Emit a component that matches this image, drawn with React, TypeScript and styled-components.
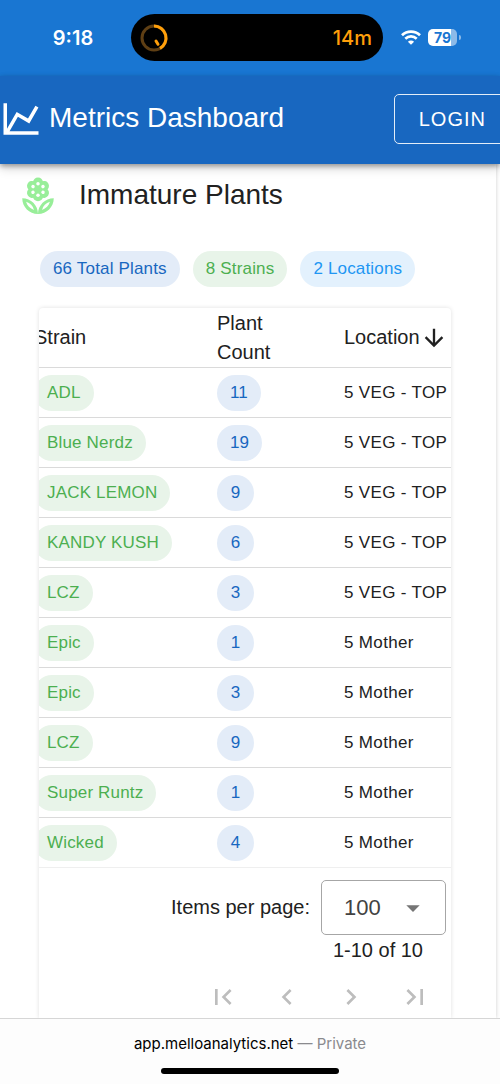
import React from 'react';
import styled, { createGlobalStyle } from 'styled-components';
import {
  MdArrowDropDown,
  MdChevronLeft,
  MdChevronRight,
  MdFirstPage,
  MdLastPage,
} from 'react-icons/md';

const tones = {
  primary: { color: '#1867c0', background: '#e3ecf8' },
  success: { color: '#4caf50', background: '#e8f4e9' },
  info: { color: '#2196f3', background: '#e3f1fd' },
};

type Tone = keyof typeof tones;

const GlobalStyle = createGlobalStyle`
  * { box-sizing: border-box; }
  body {
    margin: 0;
    background: #fff;
    color: #212121;
    font-family: "Liberation Sans", Arial, sans-serif;
    font-size: 20px;
    overflow-x: hidden;
  }
`;

const Screen = styled.div`
  display: flex;
  flex-direction: column;
  min-height: 100vh;
  overflow: hidden;
`;

const StatusBar = styled.div`
  display: grid;
  grid-template-columns: 1fr 252px 1fr;
  align-items: center;
  height: 76px;
  padding-bottom: 1px;
  background: #1976d2;
  color: #fff;
  font-family: Inter, sans-serif;
`;

const Clock = styled.time`
  justify-self: center;
  padding-left: 22px;
  font-size: 20px;
  font-weight: 600;
`;

const Island = styled.div`
  display: flex;
  align-items: center;
  justify-content: space-between;
  height: 47px;
  padding: 0 11px 0 8px;
  margin-left: 7px;
  margin-right: -7px;
  border-radius: 24px;
  background: #000;
  color: #ff9f0a;
  font-size: 20px;
  font-weight: 500;
`;

const StatusIcons = styled.div`
  display: flex;
  align-items: center;
  justify-content: flex-end;
  gap: 7px;
  padding-right: 39px;
`;

const Battery = styled.div`
  display: flex;
  align-items: center;
  gap: 2px;
`;

const BatteryBody = styled.span`
  width: 29px;
  height: 17px;
  border-radius: 5px;
  background: linear-gradient(90deg, #fff 79%, #8cbae8 79%);
  color: #1976d2;
  font-size: 14px;
  font-weight: 700;
  line-height: 17px;
  text-align: center;
`;

const BatteryCap = styled.span`
  width: 2px;
  height: 5px;
  border-radius: 0 2px 2px 0;
  background: #8cbae8;
`;

const AppBar = styled.header`
  position: relative;
  display: flex;
  align-items: center;
  height: 88px;
  padding-bottom: 2px;
  background: #1867c0;
  color: #fff;
  box-shadow: 0 2px 5px rgba(0, 0, 0, 0.35), 0 5px 10px rgba(0, 0, 0, 0.14);
`;

const AppTitle = styled.span`
  flex: 1;
  padding: 0 0 2px 7px;
  font-size: 28px;
  line-height: 36px;
  white-space: nowrap;
`;

const LoginButton = styled.button`
  height: 50px;
  flex: none;
  margin-right: -11px;
  padding: 0 24px;
  border: 1px solid #e3edf8;
  border-radius: 5px;
  background: transparent;
  color: #fff;
  font: inherit;
  letter-spacing: 1px;
`;

const Main = styled.main`
  flex: 1;
  margin-right: 4px;
  padding: 10px 45px 0 0;
  box-shadow: 0 0 4px rgba(0, 0, 0, 0.2);
`;

const Heading = styled.div`
  display: flex;
  align-items: center;
  gap: 20px;
  height: 42px;
  padding-left: 17px;
`;

const Title = styled.h1`
  margin: 0;
  font-size: 28px;
  font-weight: 400;
  line-height: 36px;
`;

const Summary = styled.div`
  display: flex;
  gap: 13px;
  padding: 35px 0 21px 40px;
`;

const Chip = styled.span<{ $tone: Tone }>`
  display: inline-flex;
  align-items: center;
  justify-content: center;
  min-width: 37px;
  height: 36px;
  padding: 0 13px;
  border-radius: 18px;
  background: ${({ $tone }) => tones[$tone].background};
  color: ${({ $tone }) => tones[$tone].color};
  font-size: 17px;
  letter-spacing: 0.01em;
  white-space: nowrap;
`;

const TableCard = styled.section`
  margin-left: 39px;
  border-radius: 4px 4px 0 0;
  box-shadow: 0 0 4px rgba(0, 0, 0, 0.13);
`;

const TableScroller = styled.div`
  overflow: hidden;
`;

const Table = styled.table`
  width: calc(100% + 25px);
  margin-left: -25px;
  border-collapse: separate;
  border-spacing: 0;
  table-layout: fixed;
`;

const HeadCell = styled.th<{ $width?: number }>`
  width: ${({ $width }) => ($width ? `${$width}px` : 'auto')};
  height: 60px;
  padding: 0 0 0 20px;
  border-bottom: 1px solid #dadada;
  font-size: 20px;
  font-weight: 400;
  line-height: 29px;
  text-align: left;

  &:nth-child(2) { padding-right: 20px; }
`;

const SortLabel = styled.span`
  display: flex;
  align-items: center;
`;

const Cell = styled.td`
  height: 50px;
  padding: 0 0 0 20px;
  border-bottom: 1px solid #dadada;
  font-size: 17px;
  letter-spacing: 0.02em;
  white-space: nowrap;

  tr:last-child > & { border-bottom-color: #efefef; }
`;

const Footer = styled.div`
  display: flex;
  flex-direction: column;
  align-items: flex-end;
  padding: 12px 5px 0 0;
`;

const PageSize = styled.div`
  display: flex;
  align-items: center;
  gap: 11px;
`;

const SelectBox = styled.div`
  position: relative;

  svg {
    position: absolute;
    top: 12px;
    right: 17px;
    color: #757575;
    pointer-events: none;
  }
`;

const Select = styled.select`
  display: block;
  width: 125px;
  height: 55px;
  padding: 0 22px;
  border: 1px solid #a6a6a6;
  border-radius: 5px;
  appearance: none;
  background: #fff;
  color: #424242;
  font: inherit;
  font-size: 22px;
`;

const Range = styled.div`
  padding-right: 23px;
  line-height: 30px;
`;

const Pager = styled.nav`
  display: flex;
  gap: 16px;
  padding: 11px 7px 0 0;
`;

const PagerButton = styled.button`
  display: flex;
  align-items: center;
  justify-content: center;
  width: 48px;
  height: 42px;
  padding: 0;
  border: 0;
  background: transparent;
  color: #bdbdbd;
`;

const BrowserBar = styled.footer`
  position: relative;
  display: flex;
  flex-direction: column;
  align-items: center;
  gap: 13px;
  height: 66px;
  padding-top: 14px;
  border-top: 1px solid #d6d6d6;
  background: #fdfdfd;
  color: #8a8a8e;
  font-family: Inter, sans-serif;
  font-size: 15px;
  line-height: 22px;
`;

const Host = styled.span`
  color: #000;
`;

const HomeIndicator = styled.div`
  width: 178px;
  height: 6px;
  border-radius: 3px;
  background: #000;
`;

const plants = [
  { strain: 'ADL', count: 11, location: '5 VEG - TOP' },
  { strain: 'Blue Nerdz', count: 19, location: '5 VEG - TOP' },
  { strain: 'JACK LEMON', count: 9, location: '5 VEG - TOP' },
  { strain: 'KANDY KUSH', count: 6, location: '5 VEG - TOP' },
  { strain: 'LCZ', count: 3, location: '5 VEG - TOP' },
  { strain: 'Epic', count: 1, location: '5 Mother' },
  { strain: 'Epic', count: 3, location: '5 Mother' },
  { strain: 'LCZ', count: 9, location: '5 Mother' },
  { strain: 'Super Runtz', count: 1, location: '5 Mother' },
  { strain: 'Wicked', count: 4, location: '5 Mother' },
];

const pagerButtons = [
  { label: 'First page', Icon: MdFirstPage },
  { label: 'Previous page', Icon: MdChevronLeft },
  { label: 'Next page', Icon: MdChevronRight },
  { label: 'Last page', Icon: MdLastPage },
];

const TimerIcon = () => (
  <svg width="30" height="30" viewBox="0 0 30 30" fill="none" stroke="#ff9f0a" strokeWidth="3">
    <circle cx="15" cy="15" r="12" stroke="#5f3f14" />
    <path d="M15 3A12 12 0 0 1 21 25.4" />
    <path d="M17 18L19 21.3" strokeLinecap="round" />
  </svg>
);

const WifiIcon = () => (
  <svg width="20" height="15" viewBox="0 0 20 15" fill="none" stroke="#fff" strokeWidth="2.7">
    <path d="M1 5.2C6 .3 14 .3 19 5.2" />
    <path d="M4.3 8.7C7.6 5.6 12.4 5.6 15.7 8.7" />
    <path d="M10 14.8L6.9 11.7C8.6 10.1 11.4 10.1 13.1 11.7Z" fill="#fff" stroke="none" />
  </svg>
);

const ChartLineIcon = () => (
  <svg width="42" height="42" viewBox="0 0 24 24" fill="currentColor">
    <path d="M16 11.78L20.24 4.45L21.97 5.45L16.74 14.5L10.23 10.75L5.46 19H22V21H2V3H4V17.54L9.5 8L16 11.78Z" />
  </svg>
);

const ArrowDownIcon = () => (
  <svg width="28" height="28" viewBox="0 0 24 24" fill="currentColor">
    <path d="M11 4H13V16L18.5 10.5L19.92 11.92L12 19.84L4.08 11.92L5.5 10.5L11 16V4Z" />
  </svg>
);

const petalAngles = [0, 60, 120, 180, 240, 300];

const FlowerIcon = () => (
  <svg width="42" height="42" viewBox="0 0 24 24" fill="#98ee99">
    <circle cx="12" cy="8.8" r="4" />
    {petalAngles.map((angle) => (
      <g key={angle} transform={`rotate(${angle} 12 8.8)`}>
        <circle cx="12" cy="4.9" r="2.9" />
      </g>
    ))}
    {petalAngles.map((angle) => (
      <g key={angle} transform={`rotate(${angle} 12 8.8)`}>
        <circle cx="12" cy="5.5" r="1" fill="#fff" />
      </g>
    ))}
    <path
      fillRule="evenodd"
      d="M12 22.8C12 17.8 16 13.8 21 13.8C21 18.8 17 22.8 12 22.8ZM14.3 20.5C16.6 19.8 18.2 18.2 18.8 15.9C16.5 16.6 14.9 18.2 14.3 20.5Z"
    />
    <path
      fillRule="evenodd"
      d="M12 22.8C12 17.8 8 13.8 3 13.8C3 18.8 7 22.8 12 22.8ZM9.7 20.5C7.4 19.8 5.8 18.2 5.2 15.9C7.5 16.6 9.1 18.2 9.7 20.5Z"
    />
  </svg>
);

export default function App() {
  return (
    <Screen>
      <GlobalStyle />
      <StatusBar>
        <Clock>9:18</Clock>
        <Island>
          <TimerIcon />
          <span>14m</span>
        </Island>
        <StatusIcons>
          <WifiIcon />
          <Battery>
            <BatteryBody>79</BatteryBody>
            <BatteryCap />
          </Battery>
        </StatusIcons>
      </StatusBar>

      <AppBar>
        <ChartLineIcon />
        <AppTitle>Metrics Dashboard</AppTitle>
        <LoginButton type="button">LOGIN</LoginButton>
      </AppBar>

      <Main>
        <Heading>
          <FlowerIcon />
          <Title>Immature Plants</Title>
        </Heading>

        <Summary>
          <Chip $tone="primary">66 Total Plants</Chip>
          <Chip $tone="success">8 Strains</Chip>
          <Chip $tone="info">2 Locations</Chip>
        </Summary>

        <TableCard>
          <TableScroller>
            <Table>
              <thead>
                <tr>
                  <HeadCell $width={183}>Strain</HeadCell>
                  <HeadCell $width={127}>Plant Count</HeadCell>
                  <HeadCell aria-sort="descending">
                    <SortLabel>
                      Location
                      <ArrowDownIcon />
                    </SortLabel>
                  </HeadCell>
                </tr>
              </thead>
              <tbody>
                {plants.map((plant, index) => (
                  <tr key={index}>
                    <Cell><Chip $tone="success">{plant.strain}</Chip></Cell>
                    <Cell><Chip $tone="primary">{plant.count}</Chip></Cell>
                    <Cell>{plant.location}</Cell>
                  </tr>
                ))}
              </tbody>
            </Table>
          </TableScroller>

          <Footer>
            <PageSize>
              <label htmlFor="page-size">Items per page:</label>
              <SelectBox>
                <Select id="page-size" defaultValue="100">
                  <option value="10">10</option>
                  <option value="25">25</option>
                  <option value="50">50</option>
                  <option value="100">100</option>
                </Select>
                <MdArrowDropDown size={32} />
              </SelectBox>
            </PageSize>
            <Range>1-10 of 10</Range>
            <Pager aria-label="Pagination">
              {pagerButtons.map(({ label, Icon }) => (
                <PagerButton key={label} type="button" aria-label={label} disabled>
                  <Icon size={32} />
                </PagerButton>
              ))}
            </Pager>
          </Footer>
        </TableCard>
      </Main>

      <BrowserBar>
        <div>
          <Host>app.melloanalytics.net</Host> — Private
        </div>
        <HomeIndicator />
      </BrowserBar>
    </Screen>
  );
}
